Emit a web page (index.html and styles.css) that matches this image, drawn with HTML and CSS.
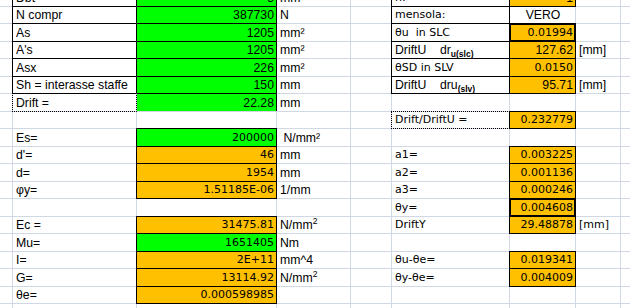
FILE: index.html
```html
<!DOCTYPE html>
<html>
<head>
<meta charset="utf-8">
<link rel="stylesheet" href="styles.css">
</head>
<body>
<div class="sheet">
  <!-- r0 -->
  <div class="c"></div><div class="c b">Dbt</div><div class="c g b r">8</div><div class="c">mm</div><div class="c"></div><div class="c b t">h:</div><div class="c o b r">1</div><div class="c"></div><div class="c"></div>
  <!-- r1 -->
  <div class="c"></div><div class="c b">N compr</div><div class="c g b r">387730</div><div class="c">N</div><div class="c"></div><div class="c b t">mensola:</div><div class="c ctr">VERO</div><div class="c"></div><div class="c"></div>
  <!-- r2 -->
  <div class="c"></div><div class="c b">As</div><div class="c g b r">1205</div><div class="c">mm²</div><div class="c"></div><div class="c b t">θu  in SLC</div><div class="c o bb r t">0.01994</div><div class="c"></div><div class="c"></div>
  <!-- r3 -->
  <div class="c"></div><div class="c b">A's</div><div class="c g b r">1205</div><div class="c">mm²</div><div class="c"></div><div class="c b"><span>DriftU    dr<span class="sub">u(slc)</span></span></div><div class="c o b r">127.62</div><div class="c">[mm]</div><div class="c"></div>
  <!-- r4 -->
  <div class="c"></div><div class="c b">Asx</div><div class="c g b r">226</div><div class="c">mm²</div><div class="c"></div><div class="c b t">θSD in SLV</div><div class="c o b r t">0.0150</div><div class="c"></div><div class="c"></div>
  <!-- r5 -->
  <div class="c"></div><div class="c b">Sh = interasse staffe</div><div class="c g b r">150</div><div class="c">mm</div><div class="c"></div><div class="c b"><span>DriftU    dru<span class="sub">(slv)</span></span></div><div class="c o b r">95.71</div><div class="c">[mm]</div><div class="c"></div>
  <!-- r6 -->
  <div class="c"></div><div class="c dot">Drift =</div><div class="c g br r">22.28</div><div class="c">mm</div><div class="c"></div><div class="c"></div><div class="c"></div><div class="c"></div><div class="c"></div>
  <!-- r7 -->
  <div class="c"></div><div class="c"></div><div class="c"></div><div class="c"></div><div class="c"></div><div class="c dot t">Drift/DriftU =</div><div class="c o b r t">0.232779</div><div class="c"></div><div class="c"></div>
  <!-- r8 -->
  <div class="c"></div><div class="c">Es=</div><div class="c g b r t">200000</div><div class="c"> N/mm²</div><div class="c"></div><div class="c"></div><div class="c"></div><div class="c"></div><div class="c"></div>
  <!-- r9 -->
  <div class="c"></div><div class="c">d'=</div><div class="c o b r t">46</div><div class="c">mm</div><div class="c"></div><div class="c t">a1=</div><div class="c o b r t">0.003225</div><div class="c"></div><div class="c"></div>
  <!-- r10 -->
  <div class="c"></div><div class="c">d=</div><div class="c o b r t">1954</div><div class="c">mm</div><div class="c"></div><div class="c t">a2=</div><div class="c o b r t">0.001136</div><div class="c"></div><div class="c"></div>
  <!-- r11 -->
  <div class="c"></div><div class="c">φy=</div><div class="c o b r t">1.51185E-06</div><div class="c">1/mm</div><div class="c"></div><div class="c t">a3=</div><div class="c o b r t">0.000246</div><div class="c"></div><div class="c"></div>
  <!-- r12 -->
  <div class="c"></div><div class="c"></div><div class="c"></div><div class="c"></div><div class="c"></div><div class="c t">θy=</div><div class="c o bb r t">0.004608</div><div class="c"></div><div class="c"></div>
  <!-- r13 -->
  <div class="c"></div><div class="c">Ec =</div><div class="c o b r t">31475.81</div><div class="c"><span>N/mm<span class="sup">2</span></span></div><div class="c"></div><div class="c t">DriftY</div><div class="c o b r t">29.48878</div><div class="c t">[mm]</div><div class="c"></div>
  <!-- r14 -->
  <div class="c"></div><div class="c">Mu=</div><div class="c g b r t">1651405</div><div class="c">Nm</div><div class="c"></div><div class="c"></div><div class="c"></div><div class="c"></div><div class="c"></div>
  <!-- r15 -->
  <div class="c"></div><div class="c">I=</div><div class="c o b r t">2E+11</div><div class="c">mm^4</div><div class="c"></div><div class="c t">θu-θe=</div><div class="c o b r t">0.019341</div><div class="c"></div><div class="c"></div>
  <!-- r16 -->
  <div class="c"></div><div class="c">G=</div><div class="c o b r t">13114.92</div><div class="c"><span>N/mm<span class="sup">2</span></span></div><div class="c"></div><div class="c t">θy-θe=</div><div class="c o b r t">0.004009</div><div class="c"></div><div class="c"></div>
  <!-- r17 -->
  <div class="c"></div><div class="c">θe=</div><div class="c o b r t">0.000598985</div><div class="c"></div><div class="c"></div><div class="c"></div><div class="c"></div><div class="c"></div><div class="c"></div>
  <!-- r18 -->
  <div class="c"></div><div class="c"></div><div class="c"></div><div class="c"></div><div class="c"></div><div class="c"></div><div class="c"></div><div class="c"></div><div class="c"></div>
</div>
</body>
</html>
```
FILE: styles.css
```css
html, body {
  margin: 0;
  padding: 0;
  background: #ffffff;
  overflow: hidden;
}
body {
  width: 630px;
  height: 308px;
}
.sheet {
  margin-top: -11px;
  display: grid;
  grid-template-columns: 12px 123px 139px 73px 40px 117px 65px 44px 1fr;
  grid-template-rows: 17px 16px 17px 16px 17px 16px 17px 16px 17px 16px 17px 16px 17px 16px 17px 16px 17px 16px 14px;
  gap: 1px;
  background: #d0d7e5;
  font-family: "Liberation Sans", Arial, sans-serif;
  font-size: 12.25px;
  color: #000;
}
.c {
  background: #ffffff;
  display: flex;
  align-items: flex-end;
  justify-content: flex-start;
  padding: 0 2px 1px 3px;
  line-height: 14px;
  white-space: pre;
  min-width: 0;
}
.r {
  justify-content: flex-end;
  padding-right: 2px;
}
.ctr {
  justify-content: center;
}
.g { background: #00ff00; }
.o { background: #ffc000; }
.b { box-shadow: 0 0 0 1px #000; }
.bb { box-shadow: 0 0 0 1px #000, inset 0 0 0 1px #000; }
.br { box-shadow: 1px 0 0 0 #000; }
.dot { outline: 1px dotted #000; }
.t {
  font-family: "DejaVu Sans", Verdana, sans-serif;
  font-size: 11px;
}
.sub {
  font-size: 8.5px;
  font-weight: bold;
  vertical-align: -3px;
  line-height: 0;
}
.sup {
  font-size: 8.5px;
  vertical-align: 5px;
  line-height: 0;
}
```
